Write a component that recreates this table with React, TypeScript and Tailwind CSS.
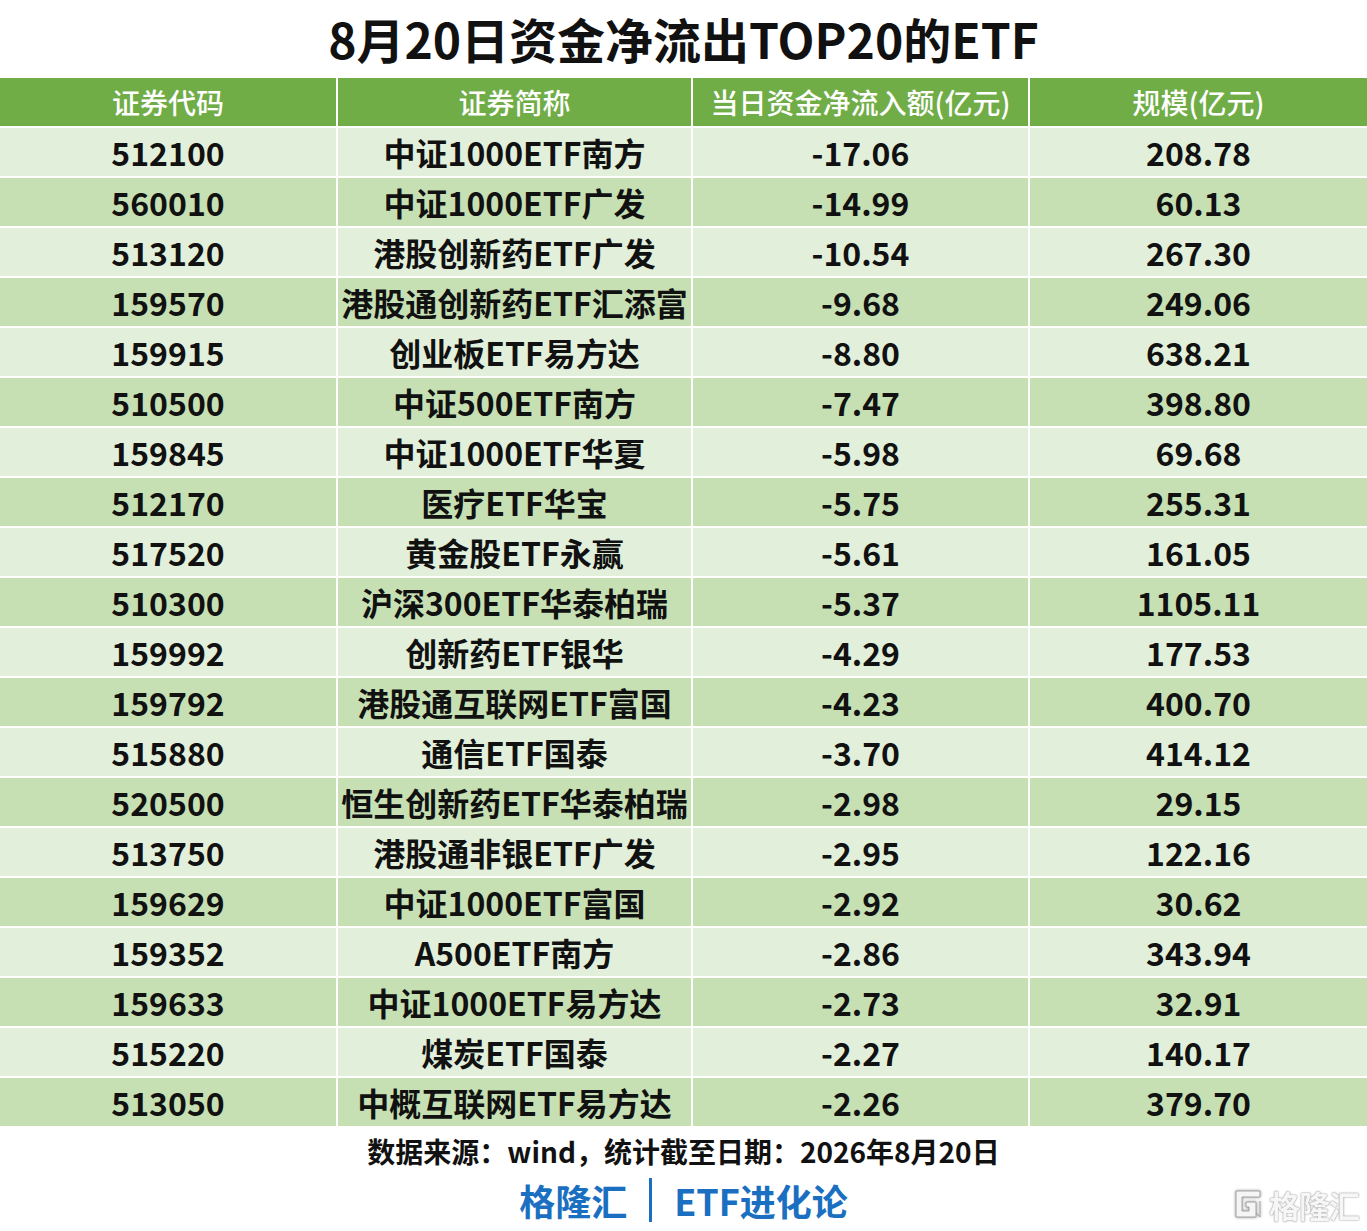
import React from "react";

type Row = { code: string; name: string; flow: string; size: string };

const ROWS: Row[] = [
  { code: "512100", name: "中证1000ETF南方", flow: "-17.06", size: "208.78" },
  { code: "560010", name: "中证1000ETF广发", flow: "-14.99", size: "60.13" },
  { code: "513120", name: "港股创新药ETF广发", flow: "-10.54", size: "267.30" },
  { code: "159570", name: "港股通创新药ETF汇添富", flow: "-9.68", size: "249.06" },
  { code: "159915", name: "创业板ETF易方达", flow: "-8.80", size: "638.21" },
  { code: "510500", name: "中证500ETF南方", flow: "-7.47", size: "398.80" },
  { code: "159845", name: "中证1000ETF华夏", flow: "-5.98", size: "69.68" },
  { code: "512170", name: "医疗ETF华宝", flow: "-5.75", size: "255.31" },
  { code: "517520", name: "黄金股ETF永赢", flow: "-5.61", size: "161.05" },
  { code: "510300", name: "沪深300ETF华泰柏瑞", flow: "-5.37", size: "1105.11" },
  { code: "159992", name: "创新药ETF银华", flow: "-4.29", size: "177.53" },
  { code: "159792", name: "港股通互联网ETF富国", flow: "-4.23", size: "400.70" },
  { code: "515880", name: "通信ETF国泰", flow: "-3.70", size: "414.12" },
  { code: "520500", name: "恒生创新药ETF华泰柏瑞", flow: "-2.98", size: "29.15" },
  { code: "513750", name: "港股通非银ETF广发", flow: "-2.95", size: "122.16" },
  { code: "159629", name: "中证1000ETF富国", flow: "-2.92", size: "30.62" },
  { code: "159352", name: "A500ETF南方", flow: "-2.86", size: "343.94" },
  { code: "159633", name: "中证1000ETF易方达", flow: "-2.73", size: "32.91" },
  { code: "515220", name: "煤炭ETF国泰", flow: "-2.27", size: "140.17" },
  { code: "513050", name: "中概互联网ETF易方达", flow: "-2.26", size: "379.70" },
];

const HEADERS = ["证券代码", "证券简称", "当日资金净流入额(亿元)", "规模(亿元)"];

const GRID = "grid grid-cols-[336px_353px_335px_1fr] gap-x-[2px]";

function Watermark() {
  return (
    <div className="absolute right-[8px] bottom-[10px] flex items-center gap-[4px] opacity-90">
      <svg width="32" height="34" viewBox="0 0 32 34" className="drop-shadow-[0_0_1.5px_rgba(0,0,0,0.45)]">
        <path
          d="M3 4 H27 V10 H9 V24 H16 V20 H13 V15 H23 V30 H3 Z"
          fill="#f4f4f4"
          stroke="#9a9a9a"
          strokeWidth="1"
        />
        <path d="M27 14 V30 L23 26" fill="none" stroke="#9a9a9a" strokeWidth="1" />
      </svg>
      <span className="text-[31px] leading-none font-bold text-[#f6f6f6] [text-shadow:0_0_2px_#8a8a8a,0_0_1px_#8a8a8a] tracking-[-1px]">
        格隆汇
      </span>
    </div>
  );
}

export default function App() {
  return (
    <div
      className="relative w-[1367px] h-[1231px] bg-white text-[#111] overflow-hidden"
      style={{ fontFamily: '"Noto Sans CJK SC", "Noto Sans", sans-serif' }}
    >
      <h1 className="h-[78px] flex items-center justify-center text-[48px] font-bold leading-none pb-[2px]">
        8月20日资金净流出TOP20的ETF
      </h1>

      <div className="flex flex-col gap-y-[2px]">
        <div className={GRID}>
          {HEADERS.map((h) => (
            <div
              key={h}
              className="h-[48px] bg-[#70ad47] flex items-center justify-center text-white text-[28px] font-medium leading-none"
            >
              {h}
            </div>
          ))}
        </div>
        {ROWS.map((r, i) => {
          const bg = i % 2 === 0 ? "bg-[#e2efda]" : "bg-[#c6e0b4]";
          return (
            <div key={r.code} className={GRID}>
              {[r.code, r.name, r.flow, r.size].map((v, j) => (
                <div
                  key={j}
                  className={`h-[48px] ${bg} flex items-center justify-center text-[32px] font-bold leading-none`}
                >
                  {v}
                </div>
              ))}
            </div>
          );
        })}
      </div>

      <div className="h-[46px] flex items-center justify-center text-[28px] font-bold leading-none mt-[2px]">
        数据来源：wind，统计截至日期：2026年8月20日
      </div>

      <div className="flex items-center justify-center text-[#1a6fc1] text-[36px] font-bold leading-none mt-[4px]">
        <span>格隆汇</span>
        <span className="mx-[22px] w-[3px] h-[44px] bg-[#1a6fc1]" />
        <span>ETF进化论</span>
      </div>

      <Watermark />
    </div>
  );
}
